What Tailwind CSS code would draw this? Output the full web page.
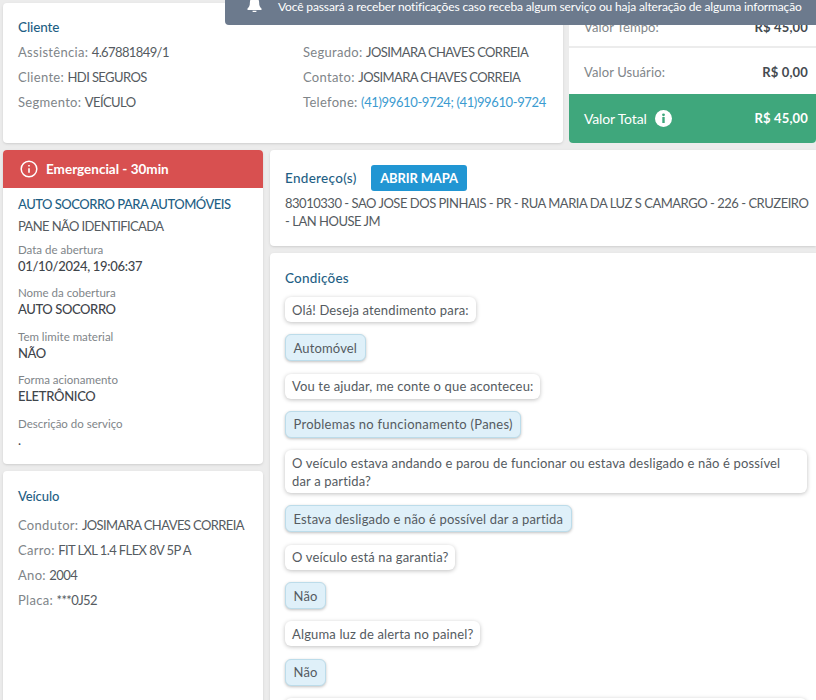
<!DOCTYPE html>
<html lang="pt-BR"><head><meta charset="utf-8">
<script src="https://cdn.jsdelivr.net/npm/@tailwindcss/browser@4"></script>
</head>
<body class="m-0 bg-[#ececec]">
<div class="relative h-[700px] w-[816px] overflow-hidden font-['Lato','Noto_Sans',sans-serif] text-[13px] tracking-[0.15px] text-[#555b61]">
  <div class="absolute right-0 top-0 z-10 flex h-[25px] w-[591px] items-center rounded-bl-[4px] bg-[#6c7a8d] pb-[12px] pl-[22px] text-[12px] tracking-[-0.14px] text-white">
    <svg class="mr-[16px] mt-[-5px] h-[16px] w-[15px] shrink-0" viewBox="0 0 14 16" fill="#fff"><path d="M7 0a1.2 1.2 0 0 0-1.2 1.2v.5C3.5 2.3 2.4 4 2.4 6.2c0 3.8-1 5-2.4 6.3V14h14v-1.500c-1.400-1.300-2.400-2.500-2.400-6.300 0-2.200-1.100-3.900-3.400-4.500v-.5A1.200 1.200 0 0 0 7 0Z"/><path d="M5 14.700h4A2 2 0 0 1 5 14.700Z"/></svg>
    <span class="whitespace-nowrap">Você passará a receber notificações caso receba algum serviço ou haja alteração de alguma informação</span>
  </div>
  <div class="flex flex-col gap-[7px] pl-[3px] pt-[3px]">
    <div class="flex h-[140px] gap-[6px]">
      <section class="w-[560px] rounded-[4px] bg-white px-[15px] pt-[14px] shadow-sm">
        <h2 class="text-[13.5px] font-medium leading-[20px] tracking-[-0.1px] text-[#1f5f85]">Cliente</h2>
        <div class="mt-[5px] grid grid-cols-[285px_1fr] gap-y-[5px] leading-[20px]">
          <p><span class="tracking-[0.3px] text-[#808589]">Assistência:</span> <span class="tracking-[-0.6px]">4.67881849/1</span></p>
          <p class="whitespace-nowrap"><span class="tracking-[0.3px] text-[#808589]">Segurado:</span> <span class="tracking-[-0.6px]">JOSIMARA CHAVES CORREIA</span></p>
          <p><span class="tracking-[0.3px] text-[#808589]">Cliente:</span> <span class="tracking-[-0.6px]">HDI SEGUROS</span></p>
          <p class="whitespace-nowrap"><span class="tracking-[0.3px] text-[#808589]">Contato:</span> <span class="tracking-[-0.6px]">JOSIMARA CHAVES CORREIA</span></p>
          <p><span class="tracking-[0.3px] text-[#808589]">Segmento:</span> <span class="tracking-[-0.6px]">VEÍCULO</span></p>
          <p class="whitespace-nowrap"><span class="tracking-[0.3px] text-[#808589]">Telefone:</span> <span class="tracking-[-0.38px] text-[#3b9bd0]">(41)99610-9724; (41)99610-9724</span></p>
        </div>
      </section>
      <section class="flex w-[247px] flex-col overflow-hidden rounded-[4px] bg-white">
        <div class="flex h-[45px] items-end justify-between border-b-[2px] border-[#ececec] pb-[9px] pl-[15px] pr-[8px]"><span class="tracking-[0.1px] text-[#808589]">Valor Tempo:</span><strong class="font-bold text-[#444a50]">R$ 45,00</strong></div>
        <div class="flex h-[46px] items-center justify-between pl-[15px] pr-[8px] pt-[4px]"><span class="tracking-[0.1px] text-[#808589]">Valor Usuário:</span><strong class="font-bold text-[#444a50]">R$ 0,00</strong></div>
        <div class="flex flex-1 items-center justify-between bg-[#3fa77c] pl-[15px] pr-[8px] text-white">
          <span class="flex items-center gap-[8px] text-[14px] tracking-[-0.15px]">Valor Total
            <svg class="h-[17px] w-[17px]" viewBox="0 0 17 17"><circle cx="8.500" cy="8.500" r="8.500" fill="#fff"/><rect x="7.300" y="7" width="2.400" height="6" fill="#3fa77c"/><circle cx="8.500" cy="4.800" r="1.400" fill="#3fa77c"/></svg>
          </span>
          <strong class="font-bold">R$ 45,00</strong>
        </div>
      </section>
    </div>
    <div class="flex gap-[7px]">
      <div class="flex w-[260px] flex-col gap-[7px]">
        <section class="h-[314px] overflow-hidden rounded-[4px] bg-white shadow-sm">
          <div class="flex h-[38px] items-center gap-[8px] bg-[#d85050] px-[17px] text-[13.5px] font-bold tracking-[0px] text-white">
            <svg class="h-[18px] w-[18px]" viewBox="0 0 18 18" fill="none" stroke="#fff" stroke-width="1.500"><circle cx="9" cy="9" r="7.800"/><path d="M9 8.300v4.500M9 5v1.400" stroke-width="1.600"/></svg>
            Emergencial - 30min
          </div>
          <div class="px-[15px] pt-[6px]">
            <h3 class="font-medium leading-[20px] tracking-[-0.5px] text-[#1f5f85]">AUTO SOCORRO PARA AUTOMÓVEIS</h3>
            <p class="mt-[2px] leading-[20px] tracking-[-0.6px]">PANE NÃO IDENTIFICADA</p>
            <dl class="mt-[5.7px] flex flex-col gap-[10.5px]">
              <div><dt class="text-[11.5px] leading-[16px] tracking-[0px] text-[#808589]">Data de abertura</dt><dd class="font-medium leading-[17px] tracking-[-0.3px] text-[#3f454b]">01/10/2024, 19:06:37</dd></div>
              <div><dt class="text-[11.5px] leading-[16px] tracking-[0px] text-[#808589]">Nome da cobertura</dt><dd class="font-medium leading-[17px] tracking-[-0.4px] text-[#3f454b]">AUTO SOCORRO</dd></div>
              <div><dt class="text-[11.5px] leading-[16px] tracking-[0px] text-[#808589]">Tem limite material</dt><dd class="font-medium leading-[17px] tracking-[-0.4px] text-[#3f454b]">NÃO</dd></div>
              <div><dt class="text-[11.5px] leading-[16px] tracking-[0px] text-[#808589]">Forma acionamento</dt><dd class="font-medium leading-[17px] tracking-[-0.3px] text-[#3f454b]">ELETRÔNICO</dd></div>
              <div><dt class="text-[11.5px] leading-[16px] tracking-[0px] text-[#808589]">Descrição do serviço</dt><dd class="font-medium leading-[17px] text-[#3f454b]">.</dd></div>
            </dl>
          </div>
        </section>
        <section class="h-[240px] rounded-[4px] bg-white px-[15px] pt-[15px] shadow-sm">
          <h2 class="font-medium leading-[20px] tracking-[-0.1px] text-[#1f5f85]">Veículo</h2>
          <div class="mt-[9px] flex flex-col gap-[5px] leading-[20px]">
            <p class="whitespace-nowrap"><span class="tracking-[0.3px] text-[#808589]">Condutor:</span> <span class="tracking-[-0.6px]">JOSIMARA CHAVES CORREIA</span></p>
            <p class="whitespace-nowrap"><span class="tracking-[0.3px] text-[#808589]">Carro:</span> <span class="tracking-[-0.6px]">FIT LXL 1.4 FLEX 8V 5P A</span></p>
            <p><span class="tracking-[0.3px] text-[#808589]">Ano:</span> <span class="tracking-[-0.6px]">2004</span></p>
            <p><span class="tracking-[0.3px] text-[#808589]">Placa:</span> <span class="tracking-[-0.6px]">***0J52</span></p>
          </div>
        </section>
      </div>
      <div class="flex w-[546px] flex-col gap-[7px]">
        <section class="h-[96px] rounded-l-[4px] bg-white pl-[15px] pr-[4px] pt-[15px] shadow-sm">
          <div class="flex items-center">
            <h2 class="w-[86px] text-[13.5px] font-medium leading-[26px] tracking-[0.3px] text-[#1f5f85]">Endereço(s)</h2>
            <span class="flex h-[26px] w-[96px] items-center justify-center rounded-[3px] bg-[#2196d3] pt-[1px] text-[13px] font-bold tracking-[-0.15px] text-white">ABRIR MAPA</span>
          </div>
          <p class="mt-[3px] leading-[18px] tracking-[-0.48px]">83010330 - SAO JOSE DOS PINHAIS - PR - RUA MARIA DA LUZ S CAMARGO - 226 - CRUZEIRO - LAN HOUSE JM</p>
        </section>
        <section class="h-[460px] rounded-l-[4px] bg-white pl-[15px] pr-[9px] pt-[15px] shadow-sm">
          <h2 class="text-[13.5px] font-medium leading-[20px] tracking-[0.2px] text-[#1f5f85]">Condições</h2>
          <div class="mt-[9px] flex flex-col items-start gap-[12.3px] leading-[18px]">
            <p class="rounded-[6px] bg-white px-[7px] py-[3.5px] shadow-[0_1px_4px_rgba(0,0,0,.25)]">Olá! Deseja atendimento para:</p>
            <p class="rounded-[6px] border border-[#bcdcea] bg-[#dff0f9] px-[7.5px] py-[3.5px] shadow-[0_1px_3px_rgba(0,0,0,.25)]">Automóvel</p>
            <p class="rounded-[6px] bg-white px-[7px] py-[3.5px] shadow-[0_1px_4px_rgba(0,0,0,.25)]">Vou te ajudar, me conte o que aconteceu:</p>
            <p class="rounded-[6px] border border-[#bcdcea] bg-[#dff0f9] px-[7.5px] py-[3.5px] tracking-[0.25px] shadow-[0_1px_3px_rgba(0,0,0,.25)]">Problemas no funcionamento (Panes)</p>
            <p class="rounded-[6px] bg-white px-[7px] py-[3.5px] pr-[9px] shadow-[0_1px_4px_rgba(0,0,0,.25)]">O veículo estava andando e parou de funcionar ou estava desligado e não é possível dar a partida?</p>
            <p class="rounded-[6px] border border-[#bcdcea] bg-[#dff0f9] px-[7.5px] py-[3.5px] shadow-[0_1px_3px_rgba(0,0,0,.25)]">Estava desligado e não é possível dar a partida</p>
            <p class="rounded-[6px] bg-white px-[7px] py-[3.5px] shadow-[0_1px_4px_rgba(0,0,0,.25)]">O veículo está na garantia?</p>
            <p class="rounded-[6px] border border-[#bcdcea] bg-[#dff0f9] px-[7.5px] py-[3.5px] shadow-[0_1px_3px_rgba(0,0,0,.25)]">Não</p>
            <p class="rounded-[6px] bg-white px-[7px] py-[3.5px] shadow-[0_1px_4px_rgba(0,0,0,.25)]">Alguma luz de alerta no painel?</p>
            <p class="rounded-[6px] border border-[#bcdcea] bg-[#dff0f9] px-[7.5px] py-[3.5px] shadow-[0_1px_3px_rgba(0,0,0,.25)]">Não</p>
            <p class="h-[25px] w-full rounded-[6px] bg-white shadow-[0_1px_4px_rgba(0,0,0,.25)]"></p>
          </div>
        </section>
      </div>
    </div>
  </div>
</div>
</body></html>
